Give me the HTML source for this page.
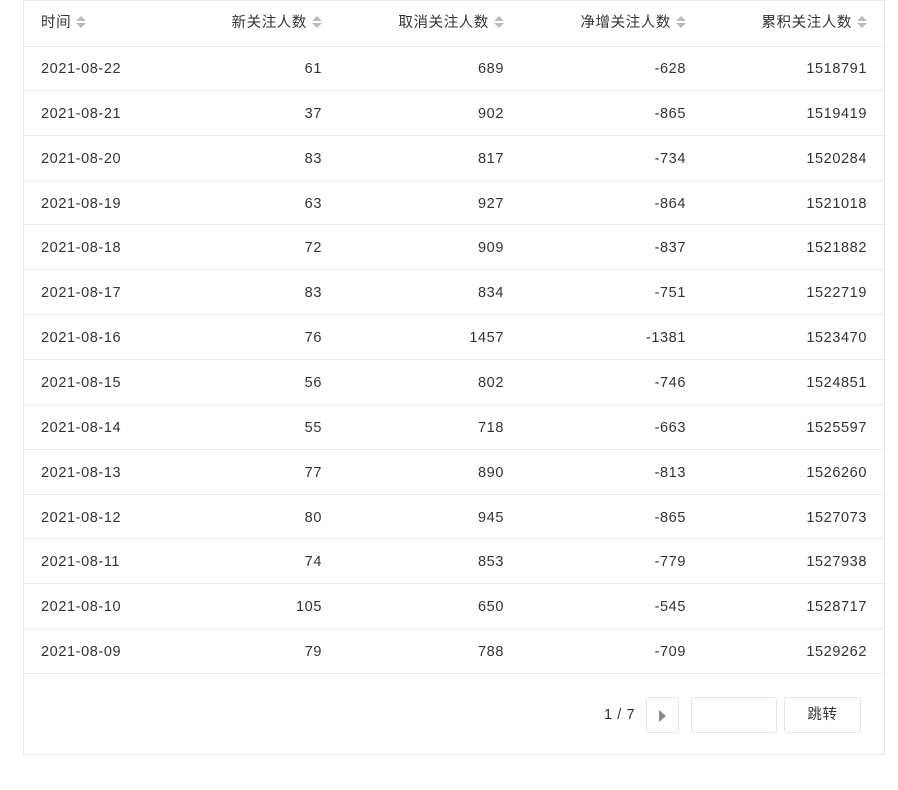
<!DOCTYPE html>
<html><head><meta charset="utf-8"><style>
body{margin:0;background:#fff;width:898px;height:790px;position:relative;font-family:"Liberation Sans","Noto Sans CJK SC",sans-serif;font-size:14.5px;color:#333;overflow:hidden;letter-spacing:0.6px}
.box{position:absolute;left:23px;top:0;width:860px;height:753px;border:1px solid #e8e8e8}
.row{position:absolute;left:0;width:860px;border-bottom:1px solid #e8e8e8;box-sizing:border-box}
.c{position:absolute;top:2px;white-space:nowrap}
.s{display:inline-block;width:10px;height:12px;vertical-align:-1px;margin-left:5px;position:relative}
.s:before{content:"";position:absolute;left:0;top:0;border:5px solid transparent;border-top:0;border-bottom:5px solid #bbb}
.s:after{content:"";position:absolute;left:0;top:7px;border:5px solid transparent;border-bottom:0;border-top:5px solid #bbb}
.btn{position:absolute;border:1px solid #e5e5e5;border-radius:3px;box-sizing:border-box;background:#fff}
</style></head><body>
<div class="box" id="b"></div>
<script>
var d=[["2021-08-22",61,689,-628,1518791],["2021-08-21",37,902,-865,1519419],["2021-08-20",83,817,-734,1520284],["2021-08-19",63,927,-864,1521018],["2021-08-18",72,909,-837,1521882],["2021-08-17",83,834,-751,1522719],["2021-08-16",76,1457,-1381,1523470],["2021-08-15",56,802,-746,1524851],["2021-08-14",55,718,-663,1525597],["2021-08-13",77,890,-813,1526260],["2021-08-12",80,945,-865,1527073],["2021-08-11",74,853,-779,1527938],["2021-08-10",105,650,-545,1528717],["2021-08-09",79,788,-709,1529262]];
var R=[298,480,662,843];var h='';
function row(top,ht,cells,hd){var s='<div class="row" style="top:'+top+'px;height:'+ht+'px;line-height:'+(ht-1)+'px">';
s+='<span class="c" style="left:17px;top:'+(hd?0:2)+'px">'+cells[0]+(hd?'<i class="s"></i>':'')+'</span>';
for(var i=1;i<5;i++)s+='<span class="c" style="top:'+(hd?0:2)+'px;right:'+(860-R[i-1])+'px">'+cells[i]+(hd?'<i class="s"></i>':'')+'</span>';
return s+'</div>';}
h+=row(0,46,["时间","新关注人数","取消关注人数","净增关注人数","累积关注人数"],1);
for(var i=0;i<14;i++){var t=45+i*44.86;h+=row(t,44.86,d[i],0);}
h+='<span style="position:absolute;left:580px;top:704px;line-height:20px">1 / 7</span>';
h+='<div class="btn" style="left:622px;top:696px;width:33px;height:36px"><span style="position:absolute;left:12px;top:12px;border:6px solid transparent;border-right:0;border-left:7px solid #888;border-top-width:6px"></span></div>';
h+='<div class="btn" style="left:667px;top:696px;width:86px;height:36px"></div>';
h+='<div class="btn" style="left:760px;top:696px;width:77px;height:36px;text-align:center;line-height:34px">跳转</div>';
document.getElementById('b').innerHTML=h;
</script>
</body></html>
